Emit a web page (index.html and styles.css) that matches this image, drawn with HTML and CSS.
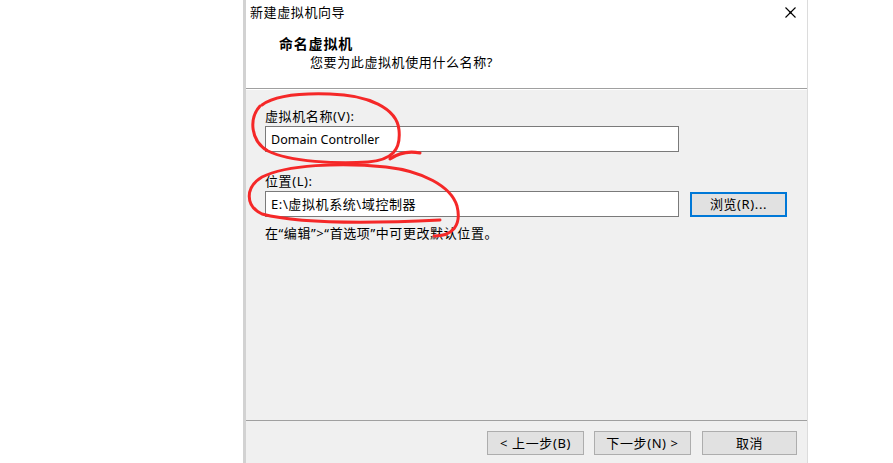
FILE: index.html
```html
<!DOCTYPE html>
<html lang="zh-CN">
<head>
<meta charset="utf-8">
<title>新建虚拟机向导</title>
<link rel="stylesheet" href="styles.css">
</head>
<body>
<div class="dialog">
  <div class="titlebar">
    <span class="title">新建虚拟机向导</span>
    <svg class="close" width="11" height="11" viewBox="0 0 11 11"><path d="M0.5 0.5 L10.5 10.5 M10.5 0.5 L0.5 10.5" stroke="#000" stroke-width="1.1" fill="none"/><rect x="4.5" y="4.5" width="2" height="2" fill="#000"/></svg>
  </div>
  <div class="header">
    <div class="heading">命名虚拟机</div>
    <div class="subheading">您要为此虚拟机使用什么名称?</div>
  </div>
  <div class="main">
    <div class="label first">虚拟机名称(V):</div>
    <div class="row">
      <div class="input"><span class="latin">Domain Controller</span></div>
    </div>
    <div class="label second">位置(L):</div>
    <div class="row">
      <div class="input">E:\虚拟机系统\域控制器</div>
      <div class="btn browse">浏览(R)...</div>
    </div>
    <div class="note">在“编辑”&gt;“首选项”中可更改默认位置。</div>
  </div>
  <div class="footer">
    <div class="btn">&lt; 上一步(B)</div>
    <div class="btn">下一步(N) &gt;</div>
    <div class="btn cancel">取消</div>
  </div>
</div>
<svg class="marks" width="893" height="463" viewBox="0 0 893 463">
  <path d="M262 105 C274 96, 300 93, 330 94 C368 95, 397 108, 399 130 C401 150, 392 160, 368 162 C338 164, 290 162, 268 151 C250 141, 249 118, 260 106 M390 159 C400 152, 410 151, 420 153" stroke="#f52828" stroke-width="3" fill="none" stroke-linecap="round"/>
  <path d="M434 236 C452 236, 462 226, 457 206 C451 186, 422 171, 386 167 C340 162, 286 165, 262 177 C245 187, 245 206, 262 214 C300 224, 380 223, 440 220" stroke="#f52828" stroke-width="3" fill="none" stroke-linecap="round"/>
</svg>
</body>
</html>
```
FILE: styles.css
```css
html, body {
  margin: 0;
  padding: 0;
  background: #ffffff;
  overflow: hidden;
}
body {
  width: 893px;
  height: 463px;
  position: relative;
  font-family: "Noto Sans", "Noto Sans CJK SC", sans-serif;
  font-size: 13px;
  letter-spacing: 0.6px;
  color: #000;
}
.dialog {
  margin-left: 243px;
  width: 561px;
  height: 463px;
  border-left: 3px solid #d2d2d2;
  border-right: 1px solid #dcdcdc;
  display: flex;
  flex-direction: column;
  background: #fff;
}
.titlebar {
  height: 25px;
  display: flex;
  align-items: flex-start;
  justify-content: space-between;
  padding: 4px 11px 0 4px;
  box-sizing: border-box;
}
.title {
  line-height: 17px;
}
.close {
  margin-top: 3px;
}
.header {
  height: 64px;
  padding-left: 33px;
  box-sizing: border-box;
  border-bottom: 1px solid #a0a0a0;
}
.heading {
  font-weight: bold;
  font-size: 14px;
  letter-spacing: 0.8px;
  line-height: 18px;
  margin-top: 10px;
}
.subheading {
  margin-left: 31px;
  line-height: 18px;
}
.main {
  flex: 1;
  background: #f0f0f0;
  border-top: 1px solid #ffffff;
  padding-left: 19px;
  display: flex;
  flex-direction: column;
  align-items: flex-start;
}
.label {
  line-height: 16px;
}
.label.first {
  margin-top: 18px;
}
.label.second {
  margin-top: 21px;
}
.row {
  display: flex;
  align-items: center;
  margin-top: 2px;
}
.input {
  width: 414px;
  height: 26px;
  box-sizing: border-box;
  border: 1px solid #7a7a7a;
  background: #fff;
  padding-left: 5px;
  line-height: 24px;
}
.latin {
  letter-spacing: 0;
  font-size: 12.5px;
}
.btn {
  width: 97px;
  height: 24px;
  box-sizing: border-box;
  border: 1px solid #adadad;
  background: #e1e1e1;
  text-align: center;
  line-height: 22px;
}
.btn.browse {
  margin-left: 11px;
  height: 25px;
  border: 2px solid #0078d7;
  line-height: 21px;
}
.note {
  margin-top: 8px;
  line-height: 16px;
}
.footer {
  height: 43px;
  background: #f0f0f0;
  border-top: 1px solid #a0a0a0;
  box-sizing: border-box;
  display: flex;
  justify-content: flex-end;
  align-items: flex-start;
  gap: 10px;
  padding: 10px 10px 0 0;
}
.btn.cancel {
  width: 95px;
  margin-left: 1px;
}
.marks {
  position: absolute;
  left: 0;
  top: 0;
  pointer-events: none;
}
```
